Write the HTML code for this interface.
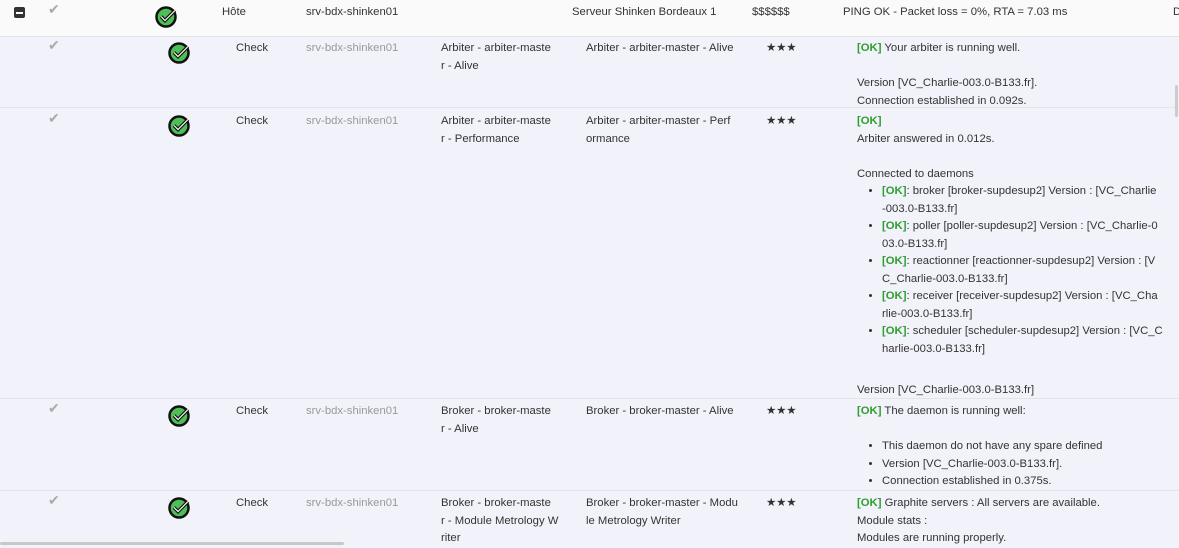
<!DOCTYPE html>
<html><head><meta charset="utf-8"><style>
body{margin:0;width:1179px;height:546px;overflow:hidden;background:#f2f2fa;font-family:"Liberation Sans",sans-serif;font-size:11.3px;color:#333;position:relative}
.a{position:absolute;white-space:nowrap;line-height:17.5px}
.row{position:absolute;left:0;width:1179px;border-top:1px solid #e3e3ea}
.g{color:#999}
.ok{color:#2e9e2e;font-weight:bold}
.ck{position:absolute;color:#aaa;font-size:14px}
ul{margin:0;padding-left:25px}
li{line-height:17.5px}
</style></head><body>
<div class="row" style="top:0;height:36px;background:#fafafa;border:none;border-bottom:1px solid #e3e3ea"></div>
<div style="position:absolute;left:14px;top:7px;width:11px;height:11px;background:#333;border-radius:2px"><div style="position:absolute;left:2px;top:5px;width:7px;height:2px;background:#fff"></div></div>
<svg width="0" height="0" style="position:absolute"><defs><symbol id="ic" viewBox="0 0 24 24"><circle cx="11" cy="13" r="9.5" fill="#4cbf56" stroke="#111" stroke-width="2.5"/><path d="M6 12.5l4 4 10-10" fill="none" stroke="#111" stroke-width="3.5"/><path d="M6 12.5l4 4 10-10" fill="none" stroke="#fff" stroke-width="1.2"/></symbol></defs></svg>
<span class="ck" style="left:48px;top:1px">✔</span>
<svg style="position:absolute;left:155px;top:4px" width="24" height="24"><use href="#ic"/></svg>
<div class="a" style="left:222px;top:4px">Hôte</div>
<div class="a" style="left:306px;top:4px">srv-bdx-shinken01</div>
<div class="a" style="left:572px;top:4px">Serveur Shinken Bordeaux 1</div>
<div class="a" style="left:752px;top:4px">$$$$$$</div>
<div class="a" style="left:843px;top:4px">PING OK - Packet loss = 0%, RTA = 7.03 ms</div>
<div class="a" style="left:1173px;top:4px">D</div>

<div class="row" style="top:107px"></div>
<div class="row" style="top:398px"></div>
<div class="row" style="top:490px"></div>

<!-- row1 -->
<span class="ck" style="left:48px;top:37px">✔</span>
<svg style="position:absolute;left:168px;top:40px" width="24" height="24"><use href="#ic"/></svg>
<div class="a" style="left:236px;top:40px">Check</div>
<div class="a g" style="left:306px;top:40px">srv-bdx-shinken01</div>
<div class="a" style="left:441px;top:40px">Arbiter - arbiter-maste<br>r - Alive</div>
<div class="a" style="left:586px;top:40px">Arbiter - arbiter-master - Alive</div>
<div class="a" style="left:766px;top:40px">★★★</div>
<div class="a" style="left:857px;top:40px"><span class="ok">[OK]</span> Your arbiter is running well.<br><br>Version [VC_Charlie-003.0-B133.fr].<br>Connection established in 0.092s.</div>

<!-- row2 -->
<span class="ck" style="left:48px;top:110px">✔</span>
<svg style="position:absolute;left:168px;top:113px" width="24" height="24"><use href="#ic"/></svg>
<div class="a" style="left:236px;top:113px">Check</div>
<div class="a g" style="left:306px;top:113px">srv-bdx-shinken01</div>
<div class="a" style="left:441px;top:113px">Arbiter - arbiter-maste<br>r - Performance</div>
<div class="a" style="left:586px;top:113px">Arbiter - arbiter-master - Perf<br>ormance</div>
<div class="a" style="left:766px;top:113px">★★★</div>
<div class="a" style="left:857px;top:113px"><span class="ok">[OK]</span><br>Arbiter answered in 0.012s.<br><br>Connected to daemons
<ul><li><span class="ok">[OK]</span>: broker [broker-supdesup2] Version : [VC_Charlie<br>-003.0-B133.fr]</li>
<li><span class="ok">[OK]</span>: poller [poller-supdesup2] Version : [VC_Charlie-0<br>03.0-B133.fr]</li>
<li><span class="ok">[OK]</span>: reactionner [reactionner-supdesup2] Version : [V<br>C_Charlie-003.0-B133.fr]</li>
<li><span class="ok">[OK]</span>: receiver [receiver-supdesup2] Version : [VC_Cha<br>rlie-003.0-B133.fr]</li>
<li><span class="ok">[OK]</span>: scheduler [scheduler-supdesup2] Version : [VC_C<br>harlie-003.0-B133.fr]</li></ul>
</div>
<div class="a" style="left:857px;top:382px">Version [VC_Charlie-003.0-B133.fr]</div>

<!-- row3 -->
<span class="ck" style="left:48px;top:400px">✔</span>
<svg style="position:absolute;left:168px;top:403px" width="24" height="24"><use href="#ic"/></svg>
<div class="a" style="left:236px;top:403px">Check</div>
<div class="a g" style="left:306px;top:403px">srv-bdx-shinken01</div>
<div class="a" style="left:441px;top:403px">Broker - broker-maste<br>r - Alive</div>
<div class="a" style="left:586px;top:403px">Broker - broker-master - Alive</div>
<div class="a" style="left:766px;top:403px">★★★</div>
<div class="a" style="left:857px;top:403px"><span class="ok">[OK]</span> The daemon is running well:<br><br>
<ul><li>This daemon do not have any spare defined</li><li>Version [VC_Charlie-003.0-B133.fr].</li><li>Connection established in 0.375s.</li></ul></div>

<!-- row4 -->
<span class="ck" style="left:48px;top:492px">✔</span>
<svg style="position:absolute;left:168px;top:495px" width="24" height="24"><use href="#ic"/></svg>
<div class="a" style="left:236px;top:495px">Check</div>
<div class="a g" style="left:306px;top:495px">srv-bdx-shinken01</div>
<div class="a" style="left:441px;top:495px">Broker - broker-maste<br>r - Module Metrology W<br>riter</div>
<div class="a" style="left:586px;top:495px">Broker - broker-master - Modu<br>le Metrology Writer</div>
<div class="a" style="left:766px;top:495px">★★★</div>
<div class="a" style="left:857px;top:495px"><span class="ok">[OK]</span> Graphite servers : All servers are available.<br>Module stats :<br>Modules are running properly.</div>

<div style="position:absolute;left:1175px;top:85px;width:3px;height:32px;background:#ccc;border-radius:2px"></div>
<div style="position:absolute;left:0;top:542px;width:344px;height:3px;background:#c8c8c8;border-radius:2px"></div>
</body></html>
